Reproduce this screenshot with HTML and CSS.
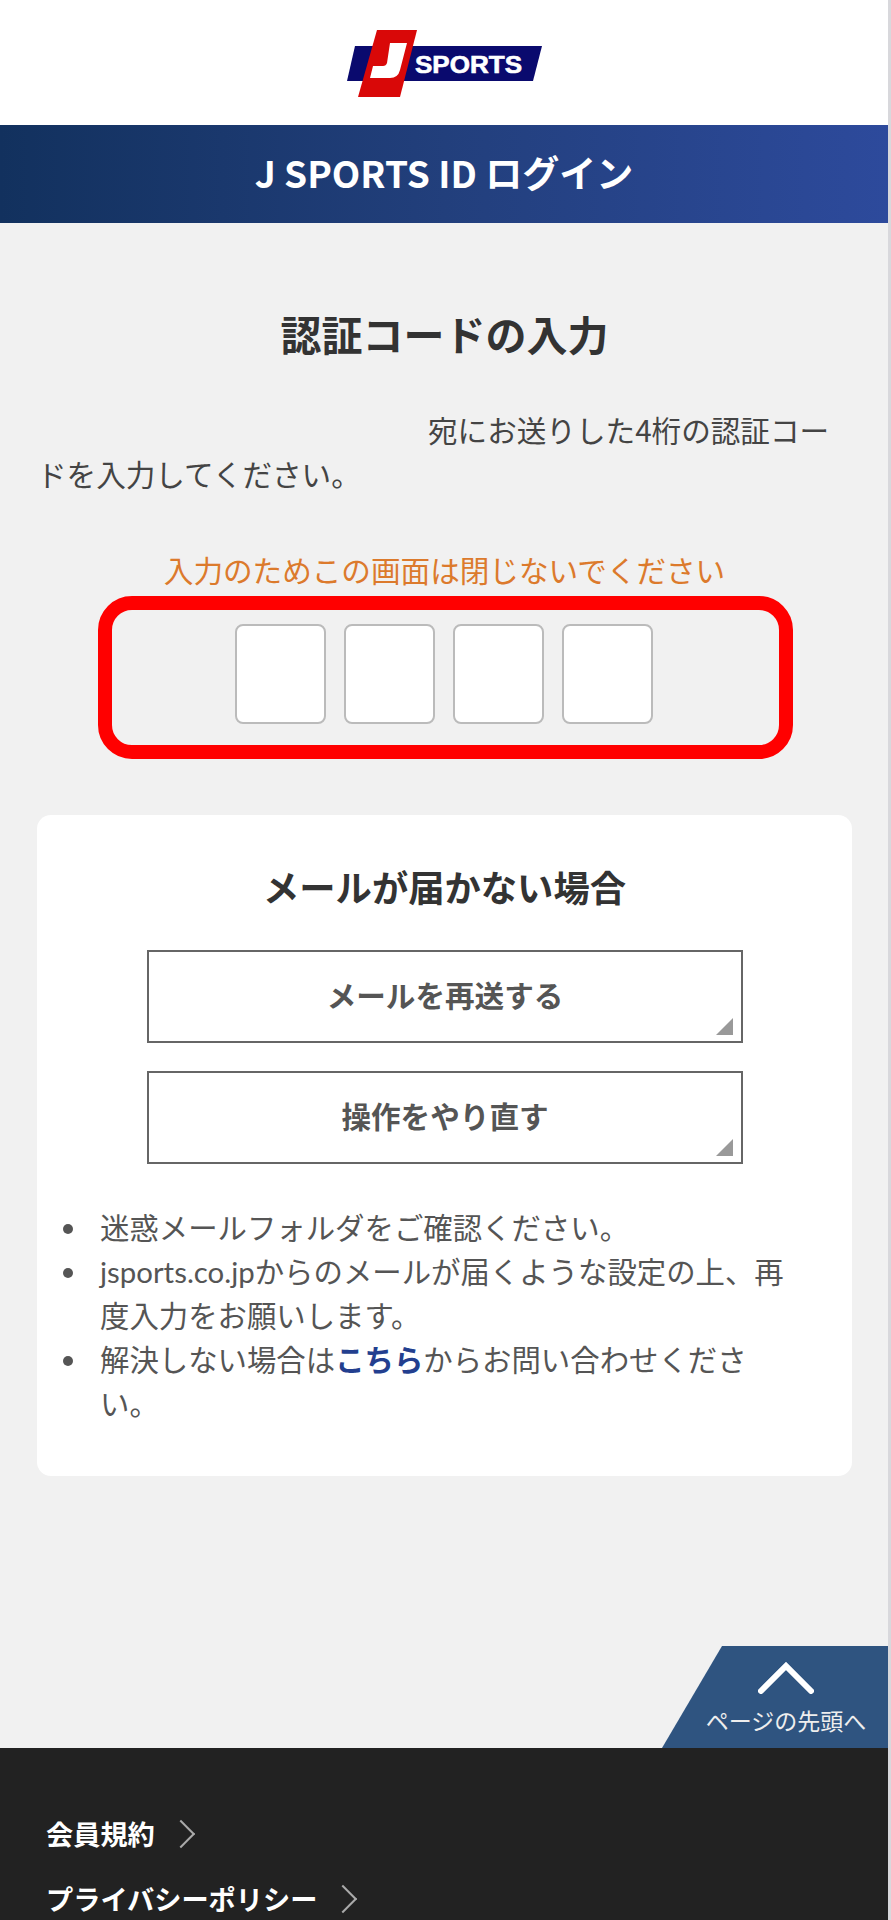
FILE: index.html
```html
<!DOCTYPE html>
<html lang="ja">
<head>
    <meta charset="UTF-8">
    <meta name="viewport" content="width=device-width, initial-scale=1.0">
    <title>J SPORTS ID ログイン</title>
    <link rel="stylesheet" href="styles.css">
</head>
<body>
    <div class="page">
        <header class="site-header">
            <svg class="logo" width="195" height="67" viewBox="0 0 195 67" role="img" aria-label="J SPORTS">
                <polygon points="8,16 195,16 186,51 0,51" fill="#0a0a6e"/>
                <polygon points="30,0 70,0 53,67 11,67" fill="#d90808"/>
                <path d="M43 13 h17 l-7 27 q-2 8 -10 8 h-20 l3 -12 h10 q3 0 4 -3 z" fill="#fff"/>
                <text x="68" y="43" class="logo-text" textLength="107" lengthAdjust="spacingAndGlyphs">SPORTS</text>
            </svg>
        </header>

        <div class="title-bar">J SPORTS ID ログイン</div>

        <main class="content">
            <h1>認証コードの入力</h1>
            <p class="lead"><span class="masked"></span>宛にお送りした4桁の認証コードを入力してください。</p>
            <p class="warning">入力のためこの画面は閉じないでください</p>

            <div class="code-box">
                <input class="code-input" type="text" maxlength="1">
                <input class="code-input" type="text" maxlength="1">
                <input class="code-input" type="text" maxlength="1">
                <input class="code-input" type="text" maxlength="1">
            </div>

            <section class="card">
                <h2>メールが届かない場合</h2>
                <a class="btn" href="#">メールを再送する</a>
                <a class="btn" href="#">操作をやり直す</a>
                <ul class="help-list">
                    <li>迷惑メールフォルダをご確認ください。</li>
                    <li>jsports.co.jpからのメールが届くような設定の上、再<br>度入力をお願いします。</li>
                    <li>解決しない場合は<a class="help-link" href="#">こちら</a>からお問い合わせくださ<br>い。</li>
                </ul>
            </section>
        </main>

        <footer class="site-footer">
            <a class="to-top" href="#">
                <svg width="56" height="32" viewBox="0 0 56 32">
                    <polyline points="3,29 28,4 53,29" fill="none" stroke="#fff" stroke-width="6" stroke-linecap="round" stroke-linejoin="miter"/>
                </svg>
                <span>ページの先頭へ</span>
            </a>
            <a class="footer-link" href="#">会員規約</a>
            <a class="footer-link" href="#">プライバシーポリシー</a>
        </footer>
    </div>
</body>
</html>
```

FILE: styles.css
```css
html, body {
    margin: 0;
    padding: 0;
    height: 1920px;
    overflow: hidden;
}

body {
    font-family: "Noto Sans CJK JP", "Noto Sans", sans-serif;
    background-color: #d8d8dc;
    color: #444;
}

.page {
    width: 888px;
    height: 1920px;
    overflow: hidden;
    background-color: #f1f1f1;
    display: flex;
    flex-direction: column;
}

.site-header {
    height: 125px;
    background: #fff;
    display: flex;
    justify-content: center;
    padding-top: 30px;
    box-sizing: border-box;
}

.logo-text {
    font-family: "Liberation Sans", sans-serif;
    font-weight: bold;
    font-size: 23px;
    fill: #fff;
    stroke: #fff;
    stroke-width: 0.6px;
}

.title-bar {
    height: 98px;
    box-sizing: border-box;
    padding-bottom: 4px;
    background: linear-gradient(90deg, #12315e 0%, #223f7c 50%, #2d4a9c 100%);
    color: #fff;
    font-size: 37px;
    font-weight: bold;
    display: flex;
    align-items: center;
    justify-content: center;
}

.content {
    padding: 0 36px 0 37px;
    flex: 1;
}

h1 {
    margin: 78px 0 0;
    font-size: 41px;
    line-height: 64px;
    text-align: center;
    color: #333;
}

.lead {
    margin: 43px 0 0;
    padding: 0 3px 0 0;
    font-size: 29.6px;
    line-height: 44px;
}

.masked {
    display: inline-block;
    width: 391px;
}

.warning {
    margin: 52px 0 0;
    font-size: 29.6px;
    line-height: 44px;
    text-align: center;
    color: #dc7a2c;
}

.code-box {
    margin: 4px 0 0 61px;
    width: 695px;
    height: 163px;
    box-sizing: border-box;
    border: 14px solid #f00;
    border-radius: 34px;
    display: flex;
    justify-content: center;
    align-items: center;
    gap: 18px;
    padding: 0 3px 7px 0;
}

.code-input {
    width: 91px;
    height: 100px;
    box-sizing: border-box;
    border: 2px solid #bbb;
    border-radius: 8px;
    background: #fff;
}

.card {
    margin-top: 56px;
    height: 661px;
    box-sizing: border-box;
    background: #fff;
    border-radius: 14px;
    padding: 42px 40px 0;
}

h2 {
    margin: 0 0 35px;
    font-size: 36.3px;
    line-height: 58px;
    text-align: center;
    color: #333;
}

.btn {
    display: flex;
    align-items: center;
    justify-content: center;
    position: relative;
    width: 596px;
    height: 93px;
    margin: 0 0 28px 70px;
    padding-bottom: 4px;
    box-sizing: border-box;
    border: 2px solid #666;
    color: #555;
    font-size: 29.6px;
    font-weight: bold;
    text-decoration: none;
}

.btn::after {
    content: "";
    position: absolute;
    right: 8px;
    bottom: 6px;
    border-style: solid;
    border-width: 0 0 17px 17px;
    border-color: transparent transparent #999 transparent;
}

.help-list {
    margin: 42px 0 0;
    padding: 0 0 0 23px;
    list-style: none;
    font-family: "Lato", "Noto Sans CJK JP", sans-serif;
    font-size: 29.4px;
    line-height: 44px;
    color: #555;
}

.help-list li::before {
    content: "";
    display: inline-block;
    width: 10px;
    height: 10px;
    margin: 0 27px 0 -37px;
    border-radius: 50%;
    background: #555;
    vertical-align: 5px;
}

.help-link {
    color: #233f8f;
    font-weight: bold;
    text-decoration: none;
}

.site-footer {
    position: relative;
    height: 172px;
    flex-shrink: 0;
    box-sizing: border-box;
    background: #222;
    padding: 62px 46px 0;
}

.footer-link {
    display: block;
    width: max-content;
    height: 65px;
    line-height: 46px;
    color: #fff;
    font-size: 27.2px;
    font-weight: bold;
    text-decoration: none;
}

.footer-link::after {
    content: "";
    display: inline-block;
    width: 18px;
    height: 18px;
    margin-left: 16px;
    border-top: 2px solid #aaa;
    border-right: 2px solid #aaa;
    transform: rotate(45deg);
    vertical-align: 1px;
}

.to-top {
    position: absolute;
    right: 0;
    bottom: 100%;
    width: 226px;
    height: 102px;
    background: #2f5480;
    clip-path: polygon(60px 0, 100% 0, 100% 100%, 0 100%);
    color: #eee;
    text-decoration: none;
    display: flex;
    flex-direction: column;
    align-items: center;
    padding-left: 22px;
    box-sizing: border-box;
}

.to-top svg {
    margin-top: 16px;
}

.to-top span {
    font-size: 23px;
    line-height: 30px;
    margin-top: 11px;
    white-space: nowrap;
}
```
